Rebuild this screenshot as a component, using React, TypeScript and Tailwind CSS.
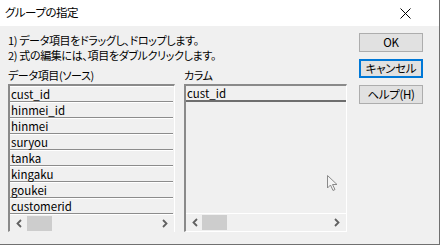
const fields = ["cust_id", "hinmei_id", "hinmei", "suryou", "tanka", "kingaku", "goukei", "customerid"];

const font = "font-['Noto_Sans_CJK_JP','Noto_Sans',sans-serif] [font-feature-settings:'palt']";

function Chevron({ dir }: { dir: "left" | "right" }) {
  return (
    <svg width="6" height="9" viewBox="0 0 6 9">
      <polyline
        points={dir === "left" ? "5,1 1.5,4.5 5,8" : "1,1 4.5,4.5 1,8"}
        fill="none"
        stroke="#606060"
        strokeWidth="1.8"
      />
    </svg>
  );
}

function HScroll({ thumbLeft }: { thumbLeft: number }) {
  return (
    <div className="relative flex h-[18px] shrink-0 items-center justify-between border-t border-white bg-[#f0f0f0] px-[6px]">
      <Chevron dir="left" />
      <div
        className="absolute top-[1px] h-[15px] w-[25px] bg-[#cdcdcd]"
        style={{ left: thumbLeft }}
      />
      <Chevron dir="right" />
    </div>
  );
}

function Row({ label }: { label: string }) {
  return (
    <div className="h-[16px] shrink-0 border-t border-t-white border-b border-b-[#8c8c8c] bg-[#f0f0f0] pl-[1px] text-[11.5px] leading-[14px] text-black">
      {label}
    </div>
  );
}

function Button({ label, focused }: { label: string; focused?: boolean }) {
  return (
    <button
      className={
        "h-[19px] w-[64px] bg-[#e1e1e1] text-[11.5px] leading-none tracking-[-0.3px] text-black " +
        (focused ? "border-2 border-[#0078d7]" : "border border-[#adadad]")
      }
    >
      {label}
    </button>
  );
}

export default function App() {
  return (
    <div className={`flex h-[245px] w-[440px] flex-col overflow-hidden border-r border-b border-[#707070] bg-[#f0f0f0] ${font}`}>
      <div className="flex h-[26px] shrink-0 items-center justify-between bg-white pl-[5px] pr-[28px]">
        <span className="text-[11.5px] tracking-[-0.5px] text-black">グループの指定</span>
        <svg width="11" height="11" viewBox="0 0 11 11">
          <path d="M0.5 0.5 L10.5 10.5 M10.5 0.5 L0.5 10.5" stroke="#000" strokeWidth="1" />
        </svg>
      </div>

      <div className="flex flex-1 pl-[8px]">
        <div className="flex w-[339px] flex-col">
          <div className="pt-[7px] text-[11px] leading-[15px] tracking-[-0.35px] text-black">
            <div>1) データ項目をドラッグし、ドロップします。</div>
            <div>2) 式の編集には、項目をダブルクリックします。</div>
          </div>

          <div className="mt-[5px] flex gap-[9px] text-[11px] leading-[15px] tracking-[-0.35px] text-black">
            <div className="w-[167px]">データ項目(ソース)</div>
            <div>カラム</div>
          </div>

          <div className="mt-[1px] flex gap-[9px]">
            <div className="flex h-[148px] w-[167px] flex-col border-t-2 border-l-2 border-t-[#8a8a8a] border-l-[#8a8a8a] border-r border-b border-r-white border-b-white">
              <div className="flex flex-1 flex-col pr-[1px]">
                {fields.map((f) => (
                  <Row key={f} label={f} />
                ))}
              </div>
              <HScroll thumbLeft={17} />
            </div>

            <div className="relative flex h-[148px] w-[163px] flex-col border-t-2 border-l-2 border-t-[#8a8a8a] border-l-[#8a8a8a] border-r border-b border-r-white border-b-white">
              <div className="flex-1">
                <div className="h-[16px] border-b-2 border-b-[#6e6e6e] bg-[#f0f0f0] pl-[1px] text-[11.5px] leading-[14px] text-black">
                  cust_id
                </div>
              </div>
              <HScroll thumbLeft={16} />
              <svg className="absolute left-[141px] top-[89px]" width="12" height="17" viewBox="0 0 12 17">
                <path d="M0.5 0.5 L0.5 13 L3.5 10 L6 15.5 L8 14.5 L5.5 9.5 L10 9.5 Z" fill="#f4f4f4" stroke="#8a8a8a" strokeWidth="1" />
              </svg>
            </div>
          </div>
        </div>

        <div className="ml-[12px] flex flex-col gap-[7px] pt-[7px]">
          <Button label="OK" />
          <Button label="キャンセル" focused />
          <Button label="ヘルプ(H)" />
        </div>
      </div>
    </div>
  );
}
